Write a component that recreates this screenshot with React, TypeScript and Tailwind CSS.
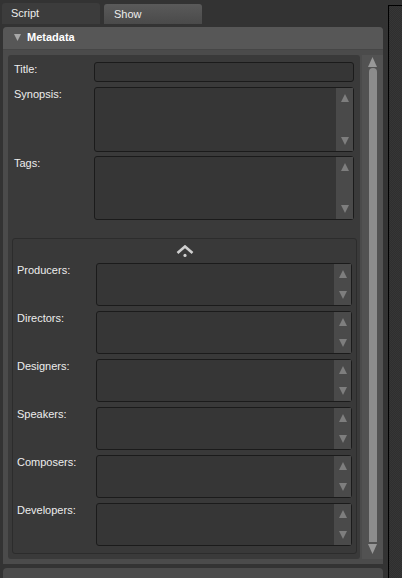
import React from "react";

function Up({ className }: { className: string }) {
  return (
    <svg width="8" height="8" viewBox="0 0 8 8" className={className}>
      <path d="M4 0 L8 8 L0 8 Z" fill="currentColor" />
    </svg>
  );
}

function Down({ className }: { className: string }) {
  return (
    <svg width="8" height="8" viewBox="0 0 8 8" className={className}>
      <path d="M0 0 L8 0 L4 8 Z" fill="currentColor" />
    </svg>
  );
}

function Box({ h, w, scroll = true }: { h: string; w: string; scroll?: boolean }) {
  return (
    <div className={`${h} ${w} flex justify-end rounded-[3px] border border-[#1b1b1b] bg-[#363636]`}>
      {scroll && (
        <div className="w-[17px] h-full bg-[#4a4a4a] flex flex-col items-center justify-between py-[6px] text-[#7e7e7e]">
          <Up className="" />
          <Down className="" />
        </div>
      )}
    </div>
  );
}

const people = ["Producers:", "Directors:", "Designers:", "Speakers:", "Composers:", "Developers:"];

export default function App() {
  return (
    <div className="w-[402px] h-[578px] bg-[#333333] flex overflow-hidden text-[11px] leading-[13px] text-[#ededed] font-['Liberation_Sans',Arial,sans-serif]">
      {/* left column */}
      <div className="w-[388px] flex flex-col">
        {/* tabs */}
        <div className="h-[27px] pt-[3px] pl-[2px] flex gap-[4px]">
          <div className="w-[98px] h-[21px] rounded-t-[3px] bg-[#3c3c3c] pl-[9px] flex items-center">Script</div>
          <div className="w-[98px] h-[20px] mt-[1px] rounded-t-[3px] bg-gradient-to-b from-[#5a5a5a] to-[#4a4a4a] pl-[10px] flex items-center">
            Show
          </div>
        </div>

        {/* Metadata panel */}
        <div className="ml-[3px] w-[380px] h-[540px] rounded-t-[4px] bg-[#4b4b4b] flex flex-col">
          <div className="h-[23px] rounded-t-[4px] bg-[#575757] border-b border-[#464646] flex items-center pl-[11px] gap-[6px]">
            <svg width="7" height="7" viewBox="0 0 7 7">
              <path d="M0 0 L7 0 L3.5 7 Z" fill="#a8a8a8" />
            </svg>
            <span className="font-bold text-white">Metadata</span>
          </div>

          <div className="flex-1 flex pt-[5px] pb-[5px]">
            <div className="ml-[5px] w-[352px] h-full bg-[#3a3a3a] rounded-[3px] flex flex-col pt-[7px]">
              {/* top fields */}
              <div className="flex pl-[6px]">
                <div className="w-[80px] pt-[1px]">Title:</div>
                <Box h="h-[20px]" w="w-[260px]" scroll={false} />
              </div>
              <div className="flex pl-[6px] mt-[5px]">
                <div className="w-[80px] pt-[1px]">Synopsis:</div>
                <Box h="h-[65px]" w="w-[260px]" />
              </div>
              <div className="flex pl-[6px] mt-[4px]">
                <div className="w-[80px] pt-[1px]">Tags:</div>
                <Box h="h-[64px]" w="w-[260px]" />
              </div>

              {/* people group */}
              <div className="mt-[18px] ml-[4px] w-[345px] h-[316px] rounded-[3px] border border-[#2c2c2c] bg-[#393939] flex flex-col">
                <div className="h-[24px] flex justify-center items-center">
                  <svg width="18" height="12" viewBox="0 0 18 12">
                    <polyline points="1.5,8 9,1.5 16.5,8" fill="none" stroke="#cfcfcf" strokeWidth="2.6" />
                    <circle cx="9" cy="10.4" r="1.6" fill="#cfcfcf" />
                  </svg>
                </div>
                <div className="flex flex-col gap-[5px]">
                  {people.map((p) => (
                    <div key={p} className="flex pl-[4px]">
                      <div className="w-[79px] pt-[1px]">{p}</div>
                      <Box h="h-[43px]" w="w-[256px]" />
                    </div>
                  ))}
                </div>
              </div>
            </div>

            {/* scrollbar */}
            <div className="ml-[2px] w-[21px] h-full bg-[#525252] flex flex-col items-center pt-[2px] pb-[5px] text-[#989898]">
              <svg width="9" height="10" viewBox="0 0 9 10">
                <path d="M4.5 0 L9 10 L0 10 Z" fill="currentColor" />
              </svg>
              <div className="mt-[1px] w-[8px] flex-1 rounded-t-full bg-[#8c8c8c]" />
              <svg width="9" height="10" viewBox="0 0 9 10" className="mt-[2px]">
                <path d="M0 0 L9 0 L4.5 10 Z" fill="currentColor" />
              </svg>
            </div>
          </div>
        </div>

        {/* next panel header */}
        <div className="mt-[4px] ml-[3px] w-[380px] h-[10px] rounded-t-[4px] bg-[#4b4b4b]" />
      </div>

      {/* right strip */}
      <div className="mt-[5px] flex-1 border-l border-t border-black bg-[repeating-conic-gradient(#363636_0_25%,#2f2f2f_0_50%)] bg-[length:2px_2px]" />
    </div>
  );
}
